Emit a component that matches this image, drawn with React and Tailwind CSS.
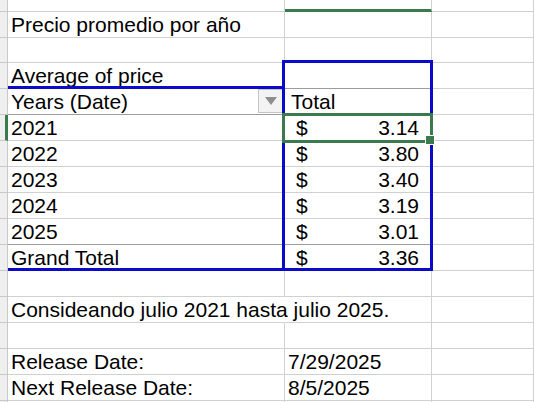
const grid = "border-[#d0d0d0]";
const dark = "border-b-[#9c9c9c]";

function Cell({ w, className = "", children }) {
  return (
    <div className={`flex h-full shrink-0 items-end border-r border-b ${grid} leading-[25px] ${w} ${className}`}>
      {children}
    </div>
  );
}

function Money({ value }) {
  return (
    <div className="flex w-full justify-between pl-[11px] pr-[12px]">
      <span>$</span>
      <span>{value}</span>
    </div>
  );
}

function Row({ h = "h-[26px]", gutter = "", b, bClass = "", c, cClass = "" }) {
  return (
    <div className={`flex ${h}`}>
      <div className={`h-full w-[8px] shrink-0 border-r border-b border-[#c9c9c9] bg-[#efefef] ${gutter}`} />
      <Cell w="w-[277px]" className={bClass}>
        {b}
      </Cell>
      <Cell w="w-[147px]" className={cClass}>
        {c}
      </Cell>
      <Cell w="grow" />
    </div>
  );
}

function Dropdown() {
  return (
    <div className="flex h-[24px] w-[26px] items-center justify-center self-start border border-[#c4c4c4] bg-[#f3f3f3]">
      <svg width="12" height="8" viewBox="0 0 12 8">
        <polygon points="0,0 12,0 6,8" fill="#8e8e8e" />
      </svg>
    </div>
  );
}

const years = [
  ["2022", "3.80"],
  ["2023", "3.40"],
  ["2024", "3.19"],
];

export default function App() {
  return (
    <div className="relative h-[402px] w-[534px] overflow-hidden bg-white font-['Liberation_Sans',Arial,sans-serif] text-[21px] text-black">
      <Row h="h-[12px]" cClass="border-b-[3px] border-b-[#3b7a4d]" />
      <Row b={<span className="pl-[3px]">Precio promedio por año</span>} />
      <Row h="h-[25px]" />
      <Row b={<span className="pl-[3px]">Average of price</span>} cClass={dark} />
      <Row
        bClass={dark}
        b={
          <div className="flex h-full w-full items-end justify-between">
            <span className="pl-[3px]">Years (Date)</span>
            <Dropdown />
          </div>
        }
        c={<span className="pl-[6px]">Total</span>}
      />
      <Row gutter="border-r-[3px] border-r-[#3b7a4d]" b={<span className="pl-[3px]">2021</span>} c={<Money value="3.14" />} />
      {years.map(([y, v]) => (
        <Row key={y} b={<span className="pl-[3px]">{y}</span>} c={<Money value={v} />} />
      ))}
      <Row bClass={dark} cClass={dark} b={<span className="pl-[3px]">2025</span>} c={<Money value="3.01" />} />
      <Row b={<span className="pl-[3px]">Grand Total</span>} c={<Money value="3.36" />} />
      <Row />
      <Row b={<span className="whitespace-nowrap pl-[3px]">Consideando julio 2021 hasta julio 2025.</span>} bClass="overflow-visible border-r-transparent" />
      <Row />
      <Row b={<span className="pl-[3px]">Release Date:</span>} c={<span className="pl-[3px]">7/29/2025</span>} />
      <Row b={<span className="pl-[3px]">Next Release Date:</span>} c={<span className="pl-[3px]">8/5/2025</span>} />
      <Row />

      {/* pivot table outline */}
      <div className="pointer-events-none absolute left-[282px] top-[60px] h-[211px] w-[151px] border-[3px] border-[#0a0ac8]" />
      <div className="pointer-events-none absolute left-[8px] top-[86px] h-[3px] w-[276px] bg-[#0a0ac8]" />
      <div className="pointer-events-none absolute left-[8px] top-[268px] h-[3px] w-[276px] bg-[#0a0ac8]" />

      {/* active cell */}
      <div className="pointer-events-none absolute left-[282px] top-[113px] h-[30px] w-[151px] border-[3px] border-[#3b7a4d]" />
      <div className="pointer-events-none absolute left-[425px] top-[135px] h-[10px] w-[10px] border border-white bg-[#3b7a4d]" />
    </div>
  );
}
